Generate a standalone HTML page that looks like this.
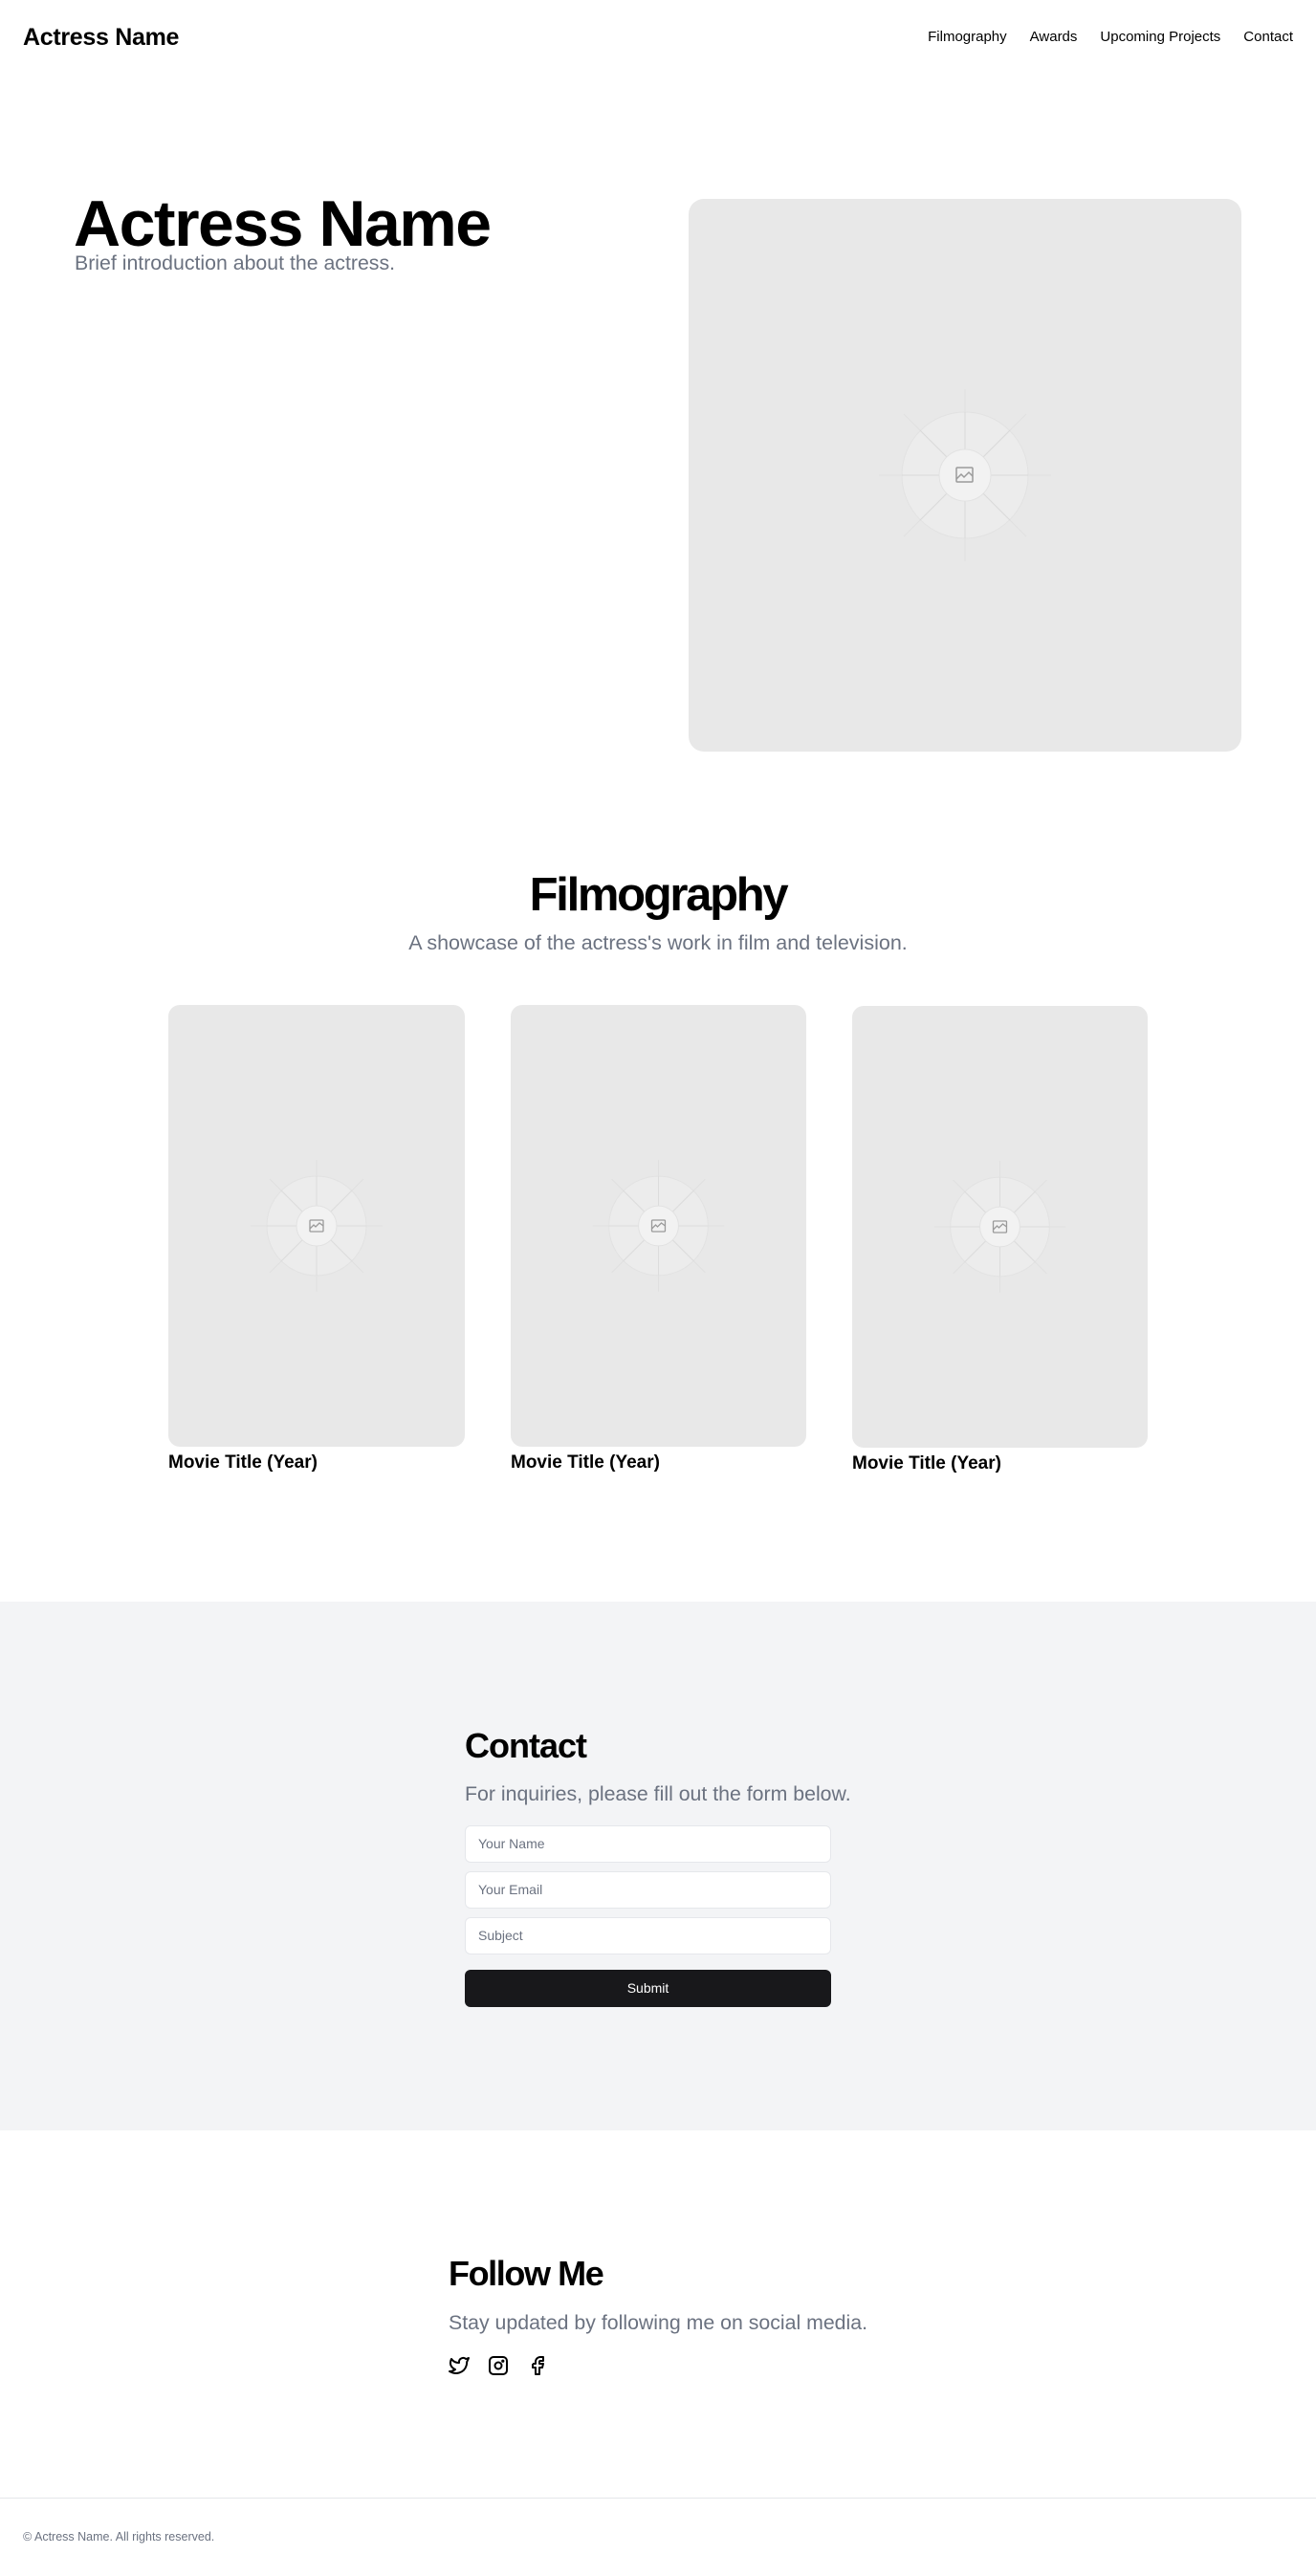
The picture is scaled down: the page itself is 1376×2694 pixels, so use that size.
<!DOCTYPE html>
<html><head><meta charset="utf-8"><style>
*{margin:0;padding:0;box-sizing:border-box}
body{width:1376px;height:2694px;position:relative;background:#fff;font-family:"Liberation Sans",Arial,sans-serif;color:#000;overflow:hidden}
.a{position:absolute;white-space:nowrap}
.ph{position:absolute;background:#e8e8e8;overflow:hidden}
.ph svg{position:absolute;left:0;top:0;width:100%;height:100%}
.gray{color:#6b7280}
.inp{position:absolute;left:486px;width:383px;height:39px;background:#fff;border:1px solid #e5e7eb;border-radius:6px;font-size:14px;color:#6b7280;padding-left:13px;line-height:37px}
</style></head><body>

<div class="a" style="left:24px;top:24px;font-size:25px;font-weight:bold;letter-spacing:-0.3px;line-height:30px">Actress Name</div>
<div class="a" style="right:24px;top:30px;font-size:15px;line-height:18px;display:flex;gap:24px">
<span>Filmography</span><span>Awards</span><span>Upcoming Projects</span><span>Contact</span></div>

<div class="a" style="left:77px;top:198px;font-size:68px;font-weight:bold;letter-spacing:-1.5px;line-height:72px">Actress Name</div>
<div class="a gray" style="left:78px;top:263px;font-size:21.3px;line-height:24px">Brief introduction about the actress.</div>

<div class="ph" style="left:720px;top:208px;width:578px;height:578px;border-radius:16px">
<svg viewBox="0 0 578 578"><g stroke="#e0e0e0" stroke-width="1" fill="none">
<line x1="225" y1="225" x2="353" y2="353"/><line x1="353" y1="225" x2="225" y2="353"/>
<line x1="289" y1="199" x2="289" y2="379"/><line x1="199" y1="289" x2="379" y2="289"/></g>
<circle cx="289" cy="289" r="66" fill="#eeeeee" fill-opacity=".6" stroke="#e2e2e2"/>
<g stroke="#dadada"><line x1="289" y1="223" x2="289" y2="355"/><line x1="223" y1="289" x2="355" y2="289"/><line x1="242" y1="242" x2="336" y2="336"/><line x1="336" y1="242" x2="242" y2="336"/></g>
<circle cx="289" cy="289" r="27" fill="#f2f2f2" stroke="#e2e2e2"/>
<g stroke="#9a9a9a" stroke-width="1.5" fill="none"><rect x="280" y="281" width="17" height="15" rx="1"/><path d="M280 293 L285 288 L288 291 L293 286 L297 290"/></g>
</svg></div>

<div class="a" style="left:0;width:1376px;text-align:center;top:906px;font-size:49px;font-weight:bold;letter-spacing:-2.3px;line-height:60px">Filmography</div>
<div class="a gray" style="left:0;width:1376px;text-align:center;top:974px;font-size:21.5px;line-height:24px">A showcase of the actress's work in film and television.</div>

<div class="ph" style="left:176px;top:1051px;width:310px;height:462px;border-radius:12px"><svg viewBox="0 0 310 462"><g stroke="#e0e0e0"><line x1="106" y1="182" x2="204" y2="280"/><line x1="204" y1="182" x2="106" y2="280"/><line x1="155" y1="162" x2="155" y2="300"/><line x1="86" y1="231" x2="224" y2="231"/></g><circle cx="155" cy="231" r="52" fill="#efefef" fill-opacity=".6" stroke="#e2e2e2"/><g stroke="#dcdcdc"><line x1="155" y1="179" x2="155" y2="283"/><line x1="103" y1="231" x2="207" y2="231"/><line x1="118" y1="194" x2="192" y2="268"/><line x1="192" y1="194" x2="118" y2="268"/></g><circle cx="155" cy="231" r="21" fill="#f2f2f2" stroke="#e2e2e2"/><g stroke="#9a9a9a" stroke-width="1.3" fill="none"><rect x="148" y="225" width="14" height="12" rx="1"/><path d="M148 234 L152 230 L154 232 L158 228 L162 231"/></g></svg></div>
<div class="ph" style="left:534px;top:1051px;width:309px;height:462px;border-radius:12px"><svg viewBox="0 0 310 462"><g stroke="#e0e0e0"><line x1="106" y1="182" x2="204" y2="280"/><line x1="204" y1="182" x2="106" y2="280"/><line x1="155" y1="162" x2="155" y2="300"/><line x1="86" y1="231" x2="224" y2="231"/></g><circle cx="155" cy="231" r="52" fill="#efefef" fill-opacity=".6" stroke="#e2e2e2"/><g stroke="#dcdcdc"><line x1="155" y1="179" x2="155" y2="283"/><line x1="103" y1="231" x2="207" y2="231"/><line x1="118" y1="194" x2="192" y2="268"/><line x1="192" y1="194" x2="118" y2="268"/></g><circle cx="155" cy="231" r="21" fill="#f2f2f2" stroke="#e2e2e2"/><g stroke="#9a9a9a" stroke-width="1.3" fill="none"><rect x="148" y="225" width="14" height="12" rx="1"/><path d="M148 234 L152 230 L154 232 L158 228 L162 231"/></g></svg></div>
<div class="ph" style="left:891px;top:1052px;width:309px;height:462px;border-radius:12px"><svg viewBox="0 0 310 462"><g stroke="#e0e0e0"><line x1="106" y1="182" x2="204" y2="280"/><line x1="204" y1="182" x2="106" y2="280"/><line x1="155" y1="162" x2="155" y2="300"/><line x1="86" y1="231" x2="224" y2="231"/></g><circle cx="155" cy="231" r="52" fill="#efefef" fill-opacity=".6" stroke="#e2e2e2"/><g stroke="#dcdcdc"><line x1="155" y1="179" x2="155" y2="283"/><line x1="103" y1="231" x2="207" y2="231"/><line x1="118" y1="194" x2="192" y2="268"/><line x1="192" y1="194" x2="118" y2="268"/></g><circle cx="155" cy="231" r="21" fill="#f2f2f2" stroke="#e2e2e2"/><g stroke="#9a9a9a" stroke-width="1.3" fill="none"><rect x="148" y="225" width="14" height="12" rx="1"/><path d="M148 234 L152 230 L154 232 L158 228 L162 231"/></g></svg></div>

<div class="a" style="left:176px;top:1519px;font-size:19px;font-weight:bold;line-height:22px">Movie Title (Year)</div>
<div class="a" style="left:534px;top:1519px;font-size:19px;font-weight:bold;line-height:22px">Movie Title (Year)</div>
<div class="a" style="left:891px;top:1520px;font-size:19px;font-weight:bold;line-height:22px">Movie Title (Year)</div>

<div style="position:absolute;left:0;top:1675px;width:1376px;height:553px;background:#f3f4f6"></div>
<div class="a" style="left:486px;top:1804px;font-size:36px;font-weight:bold;letter-spacing:-1px;line-height:44px">Contact</div>
<div class="a gray" style="left:486px;top:1864px;font-size:21.3px;line-height:24px">For inquiries, please fill out the form below.</div>
<div class="inp" style="top:1909px">Your Name</div>
<div class="inp" style="top:1957px">Your Email</div>
<div class="inp" style="top:2005px">Subject</div>
<div class="a" style="left:486px;top:2060px;width:383px;height:39px;background:#18181b;border-radius:6px;color:#fff;font-size:14px;text-align:center;line-height:39px">Submit</div>

<div class="a" style="left:469px;top:2356px;font-size:36px;font-weight:bold;letter-spacing:-1.4px;line-height:44px">Follow Me</div>
<div class="a gray" style="left:469px;top:2417px;font-size:21.3px;line-height:24px">Stay updated by following me on social media.</div>
<svg class="a" style="left:468px;top:2462px" width="24" height="24" viewBox="0 0 24 24" fill="none" stroke="#000" stroke-width="2" stroke-linejoin="round"><path d="M22 4.01c-1 .49-1.98.689-3 .99-1.121-1.265-2.783-1.335-4.38-.737S11.977 6.323 12 8v1c-3.245.083-6.135-1.395-8-4 0 0-4.182 7.433 4 11-1.872 1.247-3.739 2.088-6 2 3.308 1.803 6.913 2.423 10.034 1.517 3.58-1.04 6.522-3.723 7.651-7.742a13.840 13.840 0 0 0 .497-3.753C20.18 7.773 21.692 5.25 22 4.009z"/></svg>
<svg class="a" style="left:509px;top:2462px" width="24" height="24" viewBox="0 0 24 24" fill="none" stroke="#000" stroke-width="2"><rect x="3" y="3" width="18" height="18" rx="4"/><circle cx="12" cy="12" r="3.5"/><circle cx="16.8" cy="7.2" r=".6" fill="#000"/></svg>
<svg class="a" style="left:550px;top:2462px" width="24" height="24" viewBox="0 0 24 24" fill="none" stroke="#000" stroke-width="2" stroke-linejoin="round"><path d="M7 10v4h3v7h4v-7h3l1-4h-4V8a1 1 0 0 1 1-1h3V3h-3a5 5 0 0 0-5 5v2H7"/></svg>

<div style="position:absolute;left:0;top:2612px;width:1376px;height:1px;background:#e5e7eb"></div>
<div class="a gray" style="left:24px;top:2645px;font-size:12.5px;line-height:16px">© Actress Name. All rights reserved.</div>
</body></html>
